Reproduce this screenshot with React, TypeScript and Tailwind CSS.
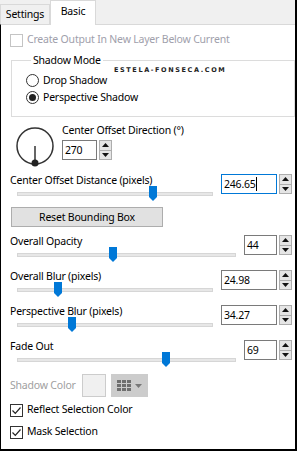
import React from 'react'

const Tri = ({ down }: { down?: boolean }) => (
    <svg width="7" height="4" viewBox="0 0 7 4">
        <path d={down ? 'M0 0 H7 L3.5 4 Z' : 'M0 4 H7 L3.5 0 Z'} fill="#111" />
    </svg>
)

function Spin({ value, boxClass, focused }: { value: string; boxClass: string; focused?: boolean }) {
    return (
        <div className="flex gap-[2px] h-[20px]">
            <div
                className={`${boxClass} h-full bg-white border ${focused ? 'border-[#0078d7]' : 'border-[#7a7a7a]'} flex items-center pl-[2px] leading-[16px]`}
            >
                {value}
                {focused && <span className="w-px h-[14px] bg-black" />}
            </div>
            <div className="w-[13px] h-full flex flex-col">
                <div className="flex-1 border border-[#adadad] bg-[#e5e5e5] flex items-center justify-center">
                    <Tri />
                </div>
                <div className="flex-1 border border-t-0 border-[#adadad] bg-[#e5e5e5] flex items-center justify-center">
                    <Tri down />
                </div>
            </div>
        </div>
    )
}

function SliderBlock({
    label,
    value,
    max,
    wide,
    focused,
}: {
    label: string
    value: number
    max: number
    wide?: boolean
    focused?: boolean
}) {
    const track = wide ? 195 : 218
    const left = 7 + (value / max) * (track - 8)
    return (
        <div className="flex h-[35px]">
            <div className="flex-1 flex flex-col">
                <div className="h-[16px] leading-[16px]">{label}</div>
                <div className="relative h-[19px] pl-[7px] pr-[8px]">
                    <div className="mt-[4px] h-[4px] bg-[#e7e7e7] border border-[#d6d6d6]" />
                    <svg className="absolute top-[-2px]" style={{ left }} width="8" height="15" viewBox="0 0 8 15">
                        <path d="M0 0 H8 V11 L4 15 L0 11 Z" fill="#0078d7" />
                    </svg>
                </div>
            </div>
            <div className="mt-[2px]">
                <Spin
                    value={String(value)}
                    boxClass={wide ? 'w-[56px]' : 'w-[33px]'}
                    focused={focused}
                />
            </div>
        </div>
    )
}

const Check = ({ checked, disabled }: { checked?: boolean; disabled?: boolean }) => (
    <div
        className={`w-[13px] h-[13px] border bg-white flex items-center justify-center ${disabled ? 'border-[#c4c4c4]' : 'border-[#333]'}`}
    >
        {checked && (
            <svg width="11" height="11" viewBox="0 0 11 11">
                <path d="M1.5 5.5 L4.3 8.3 L9.5 2.5" stroke="#222" strokeWidth="1.2" fill="none" />
            </svg>
        )}
    </div>
)

const Radio = ({ checked }: { checked?: boolean }) => (
    <div className="w-[13px] h-[13px] rounded-full border border-[#333] bg-white flex items-center justify-center">
        {checked && <div className="w-[7px] h-[7px] rounded-full bg-[#222]" />}
    </div>
)

export default function App() {
    return (
        <div className="w-[297px] h-[451px] bg-[#f0f0f0] border-r-2 border-b-2 border-black flex flex-col font-['Noto_Sans',sans-serif] text-[10.5px] tracking-[-0.2px] text-black whitespace-nowrap">
            <div className="h-[24px] flex items-end shrink-0">
                <div className="w-[50px] h-[20px] border border-b-0 border-[#d9d9d9] flex items-center justify-center pt-[1px]">
                    Settings
                </div>
                <div className="w-[46px] h-[25px] -mb-px bg-white border border-b-0 border-[#d9d9d9] relative z-10 flex items-start justify-center pt-[3px]">
                    Basic
                </div>
            </div>

            <div className="flex-1 bg-white border-t border-[#d9d9d9] border-l border-l-black pl-[9px] pr-[3px] pt-[7px] flex flex-col">
                <div className="h-[16px] flex items-center gap-[3px] text-[#a0a0ab]">
                    <Check disabled />
                    <span className="ml-[1px]">Create Output In New Layer Below Current</span>
                </div>

                <fieldset className="relative mt-[5px] ml-px w-[284px] border border-[#dcdcdc] pt-[4px] pb-[10px] pl-[14px]">
                    <legend className="ml-[5px] px-[2px] leading-[15px]">Shadow Mode</legend>
                    <div className="absolute left-[102px] top-[-2px] text-[6.5px] font-bold tracking-[1.6px] font-['DejaVu_Sans',sans-serif] text-[#222]">
                        ESTELA-FONSECA.COM
                    </div>
                    <div className="h-[17px] flex items-center gap-[4px]">
                        <Radio />
                        Drop Shadow
                    </div>
                    <div className="h-[17px] flex items-center gap-[4px]">
                        <Radio checked />
                        Perspective Shadow
                    </div>
                </fieldset>

                <div className="h-[55px] flex">
                    <svg className="ml-[4px] mt-[9px]" width="42" height="42" viewBox="0 0 42 42">
                        <circle cx="21" cy="20" r="18" stroke="#333" strokeWidth="1.5" fill="none" />
                        <line x1="21" y1="20" x2="21" y2="37" stroke="#333" strokeWidth="1.5" />
                        <circle cx="21" cy="37" r="3.5" fill="#222" />
                    </svg>
                    <div className="ml-[6px] mt-[6px] flex flex-col">
                        <div className="h-[15px] leading-[15px]">Center Offset Direction (°)</div>
                        <div className="mt-[2px]">
                            <Spin value="270" boxClass="w-[35px]" />
                        </div>
                    </div>
                </div>

                <SliderBlock label="Center Offset Distance (pixels)" value={246.65} max={350} wide focused />

                <button className="ml-px w-[152px] h-[20px] bg-[#e1e1e1] border border-[#adadad] leading-[16px] text-center">
                    Reset Bounding Box
                </button>

                <div className="mt-[6px]">
                    <SliderBlock label="Overall Opacity" value={44} max={100} />
                </div>
                <SliderBlock label="Overall Blur (pixels)" value={24.98} max={125} wide />
                <SliderBlock label="Perspective Blur (pixels)" value={34.27} max={125} wide />
                <SliderBlock label="Fade Out" value={69} max={100} />

                <div className="mt-px h-[23px] flex items-center">
                    <span className="w-[72px] text-[#a0a0a0]">Shadow Color</span>
                    <div className="w-[24px] h-[23px] bg-[#f0f0f0] border border-[#cccccc]" />
                    <div className="ml-[5px] w-[37px] h-[23px] bg-[#cccccc] flex items-center pl-[6px] gap-[4px]">
                        <svg width="14" height="12" viewBox="0 0 14 12">
                            {[0, 1, 2].map(r =>
                                [0, 1, 2].map(c => (
                                    <rect key={`${r}-${c}`} x={c * 5} y={r * 4} width="4" height="3" fill="#6e6e6e" />
                                ))
                            )}
                        </svg>
                        <svg width="7" height="4" viewBox="0 0 7 4">
                            <path d="M0 0 H7 L3.5 4 Z" fill="#777" />
                        </svg>
                    </div>
                </div>

                <div className="mt-[2px] h-[22px] flex items-center gap-[4px]">
                    <Check checked />
                    Reflect Selection Color
                </div>
                <div className="h-[22px] flex items-center gap-[4px]">
                    <Check checked />
                    Mask Selection
                </div>
            </div>
        </div>
    )
}
